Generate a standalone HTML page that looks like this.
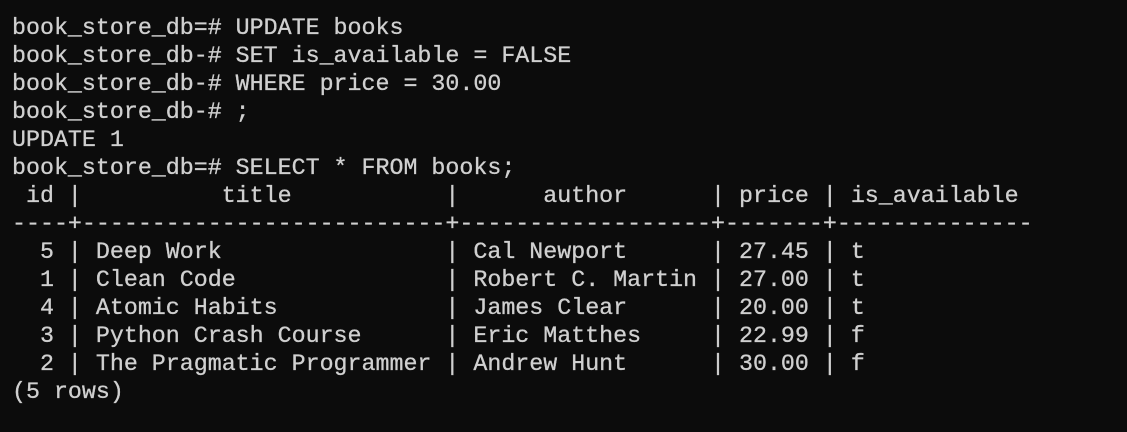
<!DOCTYPE html>
<html><head><meta charset="utf-8"><style>
html,body{margin:0;padding:0;background:#0c0c0c;width:1127px;height:432px;overflow:hidden}
pre{margin:0;padding:14px 0 0 12px;font-family:"Liberation Mono",monospace;font-size:23.3px;line-height:28px;color:#d0d0d0;white-space:pre;-webkit-text-stroke:0.3px #d0d0d0}
</style></head><body><pre>book_store_db=# UPDATE books
book_store_db-# SET is_available = FALSE
book_store_db-# WHERE price = 30.00
book_store_db-# ;
UPDATE 1
book_store_db=# SELECT * FROM books;
 id |          title           |      author      | price | is_available
----+--------------------------+------------------+-------+--------------
  5 | Deep Work                | Cal Newport      | 27.45 | t
  1 | Clean Code               | Robert C. Martin | 27.00 | t
  4 | Atomic Habits            | James Clear      | 20.00 | t
  3 | Python Crash Course      | Eric Matthes     | 22.99 | f
  2 | The Pragmatic Programmer | Andrew Hunt      | 30.00 | f
(5 rows)
</pre></body></html>
